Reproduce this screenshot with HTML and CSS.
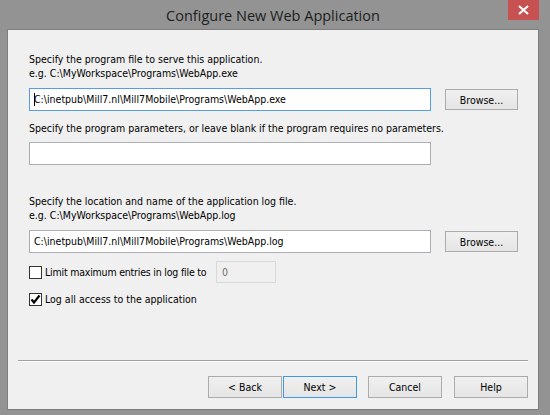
FILE: index.html
```html
<!DOCTYPE html>
<html>
<head>
<meta charset="utf-8">
<link rel="stylesheet" href="styles.css">
</head>
<body>
<div class="window">
  <div class="titlebar">
    <span class="title">Configure New Web Application</span>
    <div class="close"><svg width="11" height="10" viewBox="0 0 11 10"><path d="M1 1 L10 9 M10 1 L1 9" stroke="#fff" stroke-width="2"/></svg></div>
  </div>
  <div class="client">
    <div class="label l1">Specify the program file to serve this application.<br>e.g. C:\MyWorkspace\Programs\WebApp.exe</div>
    <div class="row r1">
      <div class="field focused"><span class="caret"></span>C:\inetpub\Mill7.nl\Mill7Mobile\Programs\WebApp.exe</div>
      <div class="btn browse">Browse...</div>
    </div>
    <div class="label l2">Specify the program parameters, or leave blank if the program requires no parameters.</div>
    <div class="row r2">
      <div class="field"></div>
    </div>
    <div class="label l3">Specify the location and name of the application log file.<br>e.g. C:\MyWorkspace\Programs\WebApp.log</div>
    <div class="row r3">
      <div class="field">C:\inetpub\Mill7.nl\Mill7Mobile\Programs\WebApp.log</div>
      <div class="btn browse">Browse...</div>
    </div>
    <div class="check c1">
      <span class="box"></span>
      <span class="ctext limit">Limit maximum entries in log file to</span>
      <div class="field disabled">0</div>
    </div>
    <div class="check c2">
      <span class="box"><svg width="11" height="11" viewBox="0 0 11 11"><path d="M1.5 5.5 L4 8.5 L9.5 1.5" stroke="#000" stroke-width="2.2" fill="none"/></svg></span>
      <span class="ctext">Log all access to the application</span>
    </div>
    <div class="spacer"></div>
    <div class="sep"></div>
    <div class="buttons">
      <div class="btn">&lt; Back</div>
      <div class="btn default">Next &gt;</div>
      <div class="btn gap">Cancel</div>
      <div class="btn gap">Help</div>
    </div>
  </div>
</div>
</body>
</html>
```

FILE: styles.css
```css
html, body {
  margin: 0;
  padding: 0;
}
body {
  width: 550px;
  height: 415px;
  overflow: hidden;
  background: #939393;
  font-family: "DejaVu Sans Condensed", "DejaVu Sans", sans-serif;
  font-stretch: condensed;
  font-size: 10.5px;
  color: #000;
}
.window {
  width: 550px;
  height: 415px;
  display: flex;
  flex-direction: column;
}
.titlebar {
  position: relative;
  height: 29px;
  width: 546px;
  display: flex;
  justify-content: center;
  align-items: center;
}
.title {
  font-family: "Open Sans", "Noto Sans", sans-serif;
  font-stretch: normal;
  font-size: 14.5px;
  color: #1e1e1e;
  padding-top: 2px;
}
.close {
  position: absolute;
  left: 508px;
  top: 0;
  width: 31px;
  height: 20px;
  background: #c75050;
  display: flex;
  align-items: center;
  justify-content: center;
}
.client {
  margin-left: 7px;
  width: 532px;
  height: 381px;
  box-sizing: border-box;
  border: 1px solid #7d7d7d;
  background: #f0f0f0;
  padding: 0 0 0 21px;
  display: flex;
  flex-direction: column;
}
.label {
  line-height: 14px;
  white-space: nowrap;
}
.l1 { margin-top: 22px; }
.l2 { margin-top: 10px; }
.l3 { margin-top: 29px; }
.row {
  display: flex;
  align-items: center;
  height: 23px;
}
.r1 { margin-top: 8px; }
.r2 { margin-top: 7px; }
.r3 { margin-top: 8px; }
.field {
  width: 402px;
  height: 23px;
  box-sizing: border-box;
  border: 1px solid #abadb3;
  background: #fff;
  padding: 0 4px;
  line-height: 21px;
  white-space: nowrap;
  overflow: hidden;
  position: relative;
}
.field.focused {
  border-color: #569de5;
}
.caret {
  position: absolute;
  left: 4px;
  top: 4px;
  width: 1px;
  height: 13px;
  background: #000;
}
.btn {
  width: 73px;
  height: 21px;
  box-sizing: border-box;
  border: 1px solid #acacac;
  background: linear-gradient(#f0f0f0, #e5e5e5);
  display: flex;
  align-items: center;
  justify-content: center;
  white-space: nowrap;
}
.browse { margin-left: 14px; }
.check {
  display: flex;
  align-items: center;
}
.c1 { margin-top: 8px; height: 22px; }
.c2 { margin-top: 5px; height: 22px; }
.box {
  width: 13px;
  height: 13px;
  box-sizing: border-box;
  border: 1px solid #333;
  background: #fff;
  display: flex;
  align-items: center;
  justify-content: center;
}
.ctext {
  margin-left: 3px;
}
.ctext.limit {
  width: 162px;
  white-space: nowrap;
  letter-spacing: -0.2px;
}
.field.disabled {
  width: 60px;
  height: 22px;
  margin-left: 9px;
  background: #f0f0f0;
  border-color: #d9d9d9;
  color: #6d6d6d;
  padding-left: 5px;
  line-height: 20px;
}
.spacer { flex: 1; }
.sep {
  margin-left: -11px;
  width: 510px;
  height: 1px;
  background: #a0a0a0;
  border-bottom: 1px solid #fff;
}
.buttons {
  display: flex;
  margin-top: 14px;
  margin-left: 179px;
  margin-bottom: 11px;
}
.buttons .btn {
  width: 74px;
  height: 22px;
  margin-right: 1px;
}
.buttons .btn.gap { margin-left: 11px; margin-right: 1px; }
.btn.default {
  border-color: #3c9ae8;
  margin-right: 0;
}
```
